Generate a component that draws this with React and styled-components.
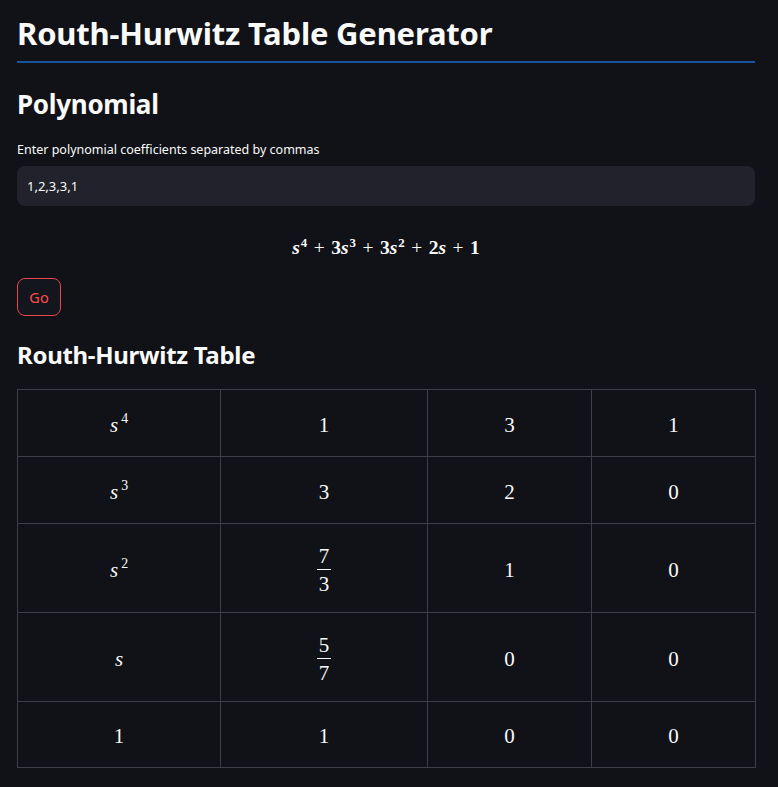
import styled, { createGlobalStyle } from "styled-components";

const Global = createGlobalStyle`
  html, body {
    margin: 0;
    padding: 0;
    background: #111217;
    color: #fafafa;
    font-family: "Noto Sans", "Open Sans", sans-serif;
  }
`;

const Page = styled.main`
  width: 738px;
  padding: 0 17px 20px 17px;
  display: flex;
  flex-direction: column;
`;

const Title = styled.h1`
  margin: 0;
  padding: 12px 0 7px 0;
  font-size: 31px;
  line-height: 42px;
  font-weight: 700;
  letter-spacing: -0.2px;
  border-bottom: 2px solid #17549f;
`;

const Heading = styled.h2`
  margin: ${(p) => p.$top}px 0 0 0;
  font-size: ${(p) => p.$size}px;
  line-height: 36px;
  font-weight: 700;
  letter-spacing: -0.3px;
`;

const Label = styled.label`
  margin-top: 20px;
  font-size: 12.5px;
  line-height: 16px;
  color: #fafafa;
`;

const Input = styled.input`
  margin-top: 8px;
  height: 40px;
  box-sizing: border-box;
  border: none;
  border-radius: 8px;
  background: #21222b;
  color: #fafafa;
  padding: 0 10px;
  font-family: "Noto Sans", sans-serif;
  font-size: 13px;
  outline: none;
`;

const Formula = styled.div`
  margin-top: 22px;
  height: 40px;
  display: flex;
  justify-content: center;
  align-items: center;
  font-family: "Liberation Serif", "DejaVu Serif", serif;
  font-size: 19.5px;
  font-weight: 700;
`;

const Var = styled.i`
  font-style: italic;
`;

const Sup = styled.sup`
  font-size: 0.66em;
  vertical-align: ${(p) => (p.$gap ? 0.65 : 0.55)}em;
  line-height: 0;
  margin-left: ${(p) => (p.$gap ? 3 : 1)}px;
`;

const Op = styled.span`
  margin: 0 6.5px;
  font-weight: 400;
`;

const GoButton = styled.button`
  margin-top: 10px;
  align-self: flex-start;
  width: 44px;
  height: 38px;
  border: 1px solid #e8464a;
  border-radius: 8px;
  background: #13161d;
  color: #ff4b4b;
  font-family: "Noto Sans", sans-serif;
  font-size: 14.5px;
  padding: 0;
`;

const Table = styled.div`
  margin-top: 16px;
  display: grid;
  grid-template-columns: 203px 207px 164px 164px;
  grid-template-rows: 67px 67px 89px 89px 66px;
  border-top: 1px solid #3d3f46;
  border-left: 1px solid #3d3f46;
  font-family: "Liberation Serif", "DejaVu Serif", serif;
  font-size: 21px;
`;

const Cell = styled.div`
  display: flex;
  justify-content: center;
  align-items: center;
  padding-top: 4px;
  border-right: 1px solid #3d3f46;
  border-bottom: 1px solid #3d3f46;
`;

const Frac = styled.span`
  display: inline-flex;
  flex-direction: column;
  align-items: center;
  line-height: 22px;
`;

const Bar = styled.span`
  width: 14px;
  height: 1px;
  background: #fafafa;
  margin: 2px 0 3px 0;
`;

const Power = ({ n }) => (
  <span>
    <Var>s</Var>
    {n && <Sup $gap>{n}</Sup>}
  </span>
);

const Fraction = ({ num, den }) => (
  <Frac>
    <span>{num}</span>
    <Bar />
    <span>{den}</span>
  </Frac>
);

const rows = [
  [<Power n="4" />, "1", "3", "1"],
  [<Power n="3" />, "3", "2", "0"],
  [<Power n="2" />, <Fraction num="7" den="3" />, "1", "0"],
  [<Power />, <Fraction num="5" den="7" />, "0", "0"],
  ["1", "1", "0", "0"],
];

export default function App() {
  return (
    <>
      <Global />
      <Page>
        <Title>Routh-Hurwitz Table Generator</Title>
        <Heading $top={23} $size={26}>Polynomial</Heading>
        <Label>Enter polynomial coefficients separated by commas</Label>
        <Input defaultValue="1,2,3,3,1" />
        <Formula>
          <span>
            <Var>s</Var>
            <Sup>4</Sup>
            <Op>+</Op>3<Var>s</Var>
            <Sup>3</Sup>
            <Op>+</Op>3<Var>s</Var>
            <Sup>2</Sup>
            <Op>+</Op>2<Var>s</Var>
            <Op>+</Op>1
          </span>
        </Formula>
        <GoButton>Go</GoButton>
        <Heading $top={21} $size={24}>Routh-Hurwitz Table</Heading>
        <Table>
          {rows.map((row, i) =>
            row.map((c, j) => <Cell key={i + "-" + j}>{c}</Cell>)
          )}
        </Table>
      </Page>
    </>
  );
}
